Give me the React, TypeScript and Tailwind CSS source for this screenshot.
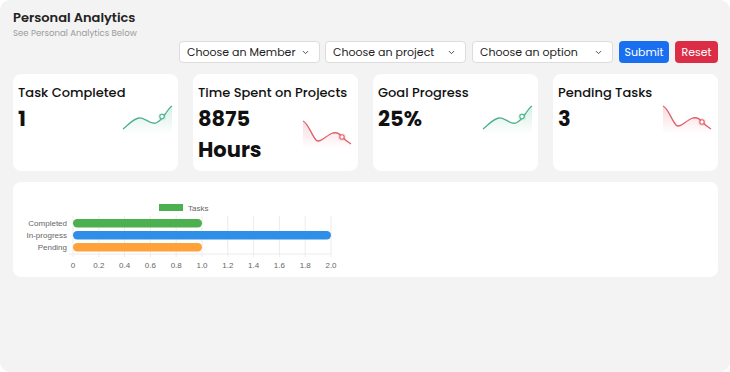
import React from "react";

const font = { fontFamily: "Poppins, Inter, 'Noto Sans', sans-serif" };

function Chevron() {
  return (
    <svg width="9" height="9" viewBox="0 0 24 24" fill="none" stroke="#444" strokeWidth="2.5" strokeLinecap="round" strokeLinejoin="round">
      <path d="M6 9l6 6 6-6" />
    </svg>
  );
}

function Select({ label }: { label: string }) {
  return (
    <div className="w-[141px] h-[22px] bg-white border border-[#dcdcdc] rounded-[4px] flex items-center justify-between pl-[7px] pr-[9px] text-[11px] text-[#222]">
      <span>{label}</span>
      <Chevron />
    </div>
  );
}

function Spark({ up, id }: { up: boolean; id: string }) {
  const color = up ? "#4bb38a" : "#e35d6a";
  const line = up
    ? "M1 25 C 6 21, 11 15, 17 14 C 23 13, 28 21, 34 19 C 39 17, 42 12, 44 9 C 46 6, 48 3, 50 2"
    : "M1 2 C 6 4, 9 15, 14 21 C 18 25, 24 16, 31 14 C 35 13, 38 15, 40 18 C 43 21, 46 23, 49 25";
  const area = up ? line + " L50 30 L1 30 Z" : line + " L49 30 L1 30 Z";
  const m = up ? { x: 40, y: 12.5 } : { x: 40, y: 18 };
  return (
    <svg width="52" height="30" viewBox="0 0 52 30" className="shrink-0 overflow-visible">
      <defs>
        <linearGradient id={id} x1="0" y1="0" x2="0" y2="1">
          <stop offset="0" stopColor={color} stopOpacity="0.22" />
          <stop offset="1" stopColor={color} stopOpacity="0" />
        </linearGradient>
      </defs>
      <path d={area} fill={`url(#${id})`} />
      <path d={line} fill="none" stroke={color} strokeWidth="1.3" />
      <circle cx={m.x} cy={m.y} r="4" fill={color} fillOpacity="0.15" />
      <circle cx={m.x} cy={m.y} r="2.2" fill="#fff" stroke={color} strokeWidth="1.1" />
    </svg>
  );
}

function Card({ title, value, up, id }: { title: string; value: string; up: boolean; id: string }) {
  return (
    <div className="w-[165px] h-[97px] bg-white rounded-[8px] pl-[5px] pr-[4px] pt-[9px]">
      <div className="text-[13px] font-medium leading-[20px] text-[#111] whitespace-nowrap">{title}</div>
      <div className="flex items-center justify-between">
        <div className="text-[21px] font-bold leading-[31px] text-[#111]">{value}</div>
        <Spark up={up} id={id} />
      </div>
    </div>
  );
}

function Chart() {
  const x0 = 60;
  const unit = 129;
  const ticks = [0, 0.2, 0.4, 0.6, 0.8, 1.0, 1.2, 1.4, 1.6, 1.8, 2.0];
  const labels = ["0", "0.2", "0.4", "0.6", "0.8", "1.0", "1.2", "1.4", "1.6", "1.8", "2.0"];
  const bars = [
    { name: "Completed", v: 1, y: 37, c: "#4caf50" },
    { name: "In-progress", v: 2, y: 49, c: "#2f8fe8" },
    { name: "Pending", v: 1, y: 61, c: "#ffa23a" },
  ];
  const f = { fontFamily: "'Liberation Sans', Arial, sans-serif" };
  return (
    <svg width="705" height="95" viewBox="0 0 705 95" style={f}>
      <rect x="146" y="22" width="24" height="7" fill="#4caf50" />
      <text x="175" y="29" fontSize="8" fill="#666">Tasks</text>
      {ticks.map((t, i) => (
        <line key={i} x1={x0 + t * unit} y1="34" x2={x0 + t * unit} y2="75" stroke="#ececec" strokeWidth="1" />
      ))}
      <line x1={x0 - 4} y1="72" x2={x0 + 2 * unit} y2="72" stroke="#ececec" strokeWidth="1" />
      {bars.map((b) => (
        <g key={b.name}>
          <text x="54" y={b.y + 7} fontSize="8" fill="#666" textAnchor="end">{b.name}</text>
          <rect x={x0} y={b.y} width={b.v * unit} height="8.5" rx="4.2" fill={b.c} />
        </g>
      ))}
      {ticks.map((t, i) => (
        <text key={i} x={x0 + t * unit} y="86" fontSize="8" fill="#666" textAnchor="middle">{labels[i]}</text>
      ))}
    </svg>
  );
}

export default function App() {
  return (
    <div className="w-[730px] h-[372px] bg-white" style={font}>
      <div className="w-full h-full bg-[#f3f3f3] rounded-[10px] px-[13px] pt-[9px] pr-[12px]">
        <div className="text-[13px] font-semibold text-[#222] leading-[18px]">Personal Analytics</div>
        <div className="text-[8.6px] text-[#9b9b9b] leading-[12px]">See Personal Analytics Below</div>
        <div className="flex justify-end items-center gap-[5px] mt-[2px]">
          <Select label="Choose an Member" />
          <Select label="Choose an project" />
          <div className="ml-[1px]"><Select label="Choose an option" /></div>
          <button className="w-[50px] h-[22px] bg-[#1a6ff0] text-white text-[11px] rounded-[4px] ml-[1px]">Submit</button>
          <button className="w-[43px] h-[22px] bg-[#dc2d47] text-white text-[11px] rounded-[4px] ml-[1px]">Reset</button>
        </div>
        <div className="flex gap-[15px] mt-[11px]">
          <Card title="Task Completed" value="1" up id="g1" />
          <Card title="Time Spent on Projects" value="8875 Hours" up={false} id="g2" />
          <Card title="Goal Progress" value="25%" up id="g3" />
          <Card title="Pending Tasks" value="3" up={false} id="g4" />
        </div>
        <div className="mt-[11px] w-[705px] h-[95px] bg-white rounded-[8px]">
          <Chart />
        </div>
      </div>
    </div>
  );
}
